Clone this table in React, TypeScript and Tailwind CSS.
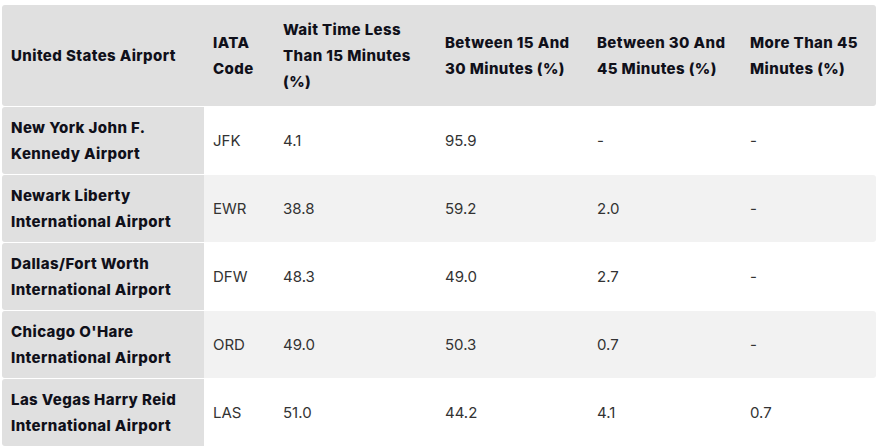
import React from 'react'

interface AirportRow {
  name: string
  code: string
  under15: string
  from15to30: string
  from30to45: string
  over45: string
}

const headers = [
  'United States Airport',
  'IATA Code',
  'Wait Time Less Than 15 Minutes (%)',
  'Between 15 And 30 Minutes (%)',
  'Between 30 And 45 Minutes (%)',
  'More Than 45 Minutes (%)',
]

const rows: AirportRow[] = [
  { name: 'New York John F. Kennedy Airport', code: 'JFK', under15: '4.1', from15to30: '95.9', from30to45: '-', over45: '-' },
  { name: 'Newark Liberty International Airport', code: 'EWR', under15: '38.8', from15to30: '59.2', from30to45: '2.0', over45: '-' },
  { name: 'Dallas/Fort Worth International Airport', code: 'DFW', under15: '48.3', from15to30: '49.0', from30to45: '2.7', over45: '-' },
  { name: "Chicago O'Hare International Airport", code: 'ORD', under15: '49.0', from15to30: '50.3', from30to45: '0.7', over45: '-' },
  { name: 'Las Vegas Harry Reid International Airport', code: 'LAS', under15: '51.0', from15to30: '44.2', from30to45: '4.1', over45: '0.7' },
]

const cols = 'grid grid-cols-[202px_70px_162px_152px_153px_135px]'

export default function App() {
  return (
    <div className="w-[878px] h-[446px] overflow-hidden bg-white pt-[5px] pl-[2px] font-['Inter','Liberation_Sans',sans-serif]">
      <div className="flex w-[874px] flex-col gap-[1px]">
        {/* Header */}
        <div className={`${cols} h-[101px] items-center rounded-[3px] bg-[#e0e0e0]`}>
          {headers.map((h) => (
            <div key={h} className="pl-[9px] pr-[6px] text-[15px] font-extrabold leading-[26px] tracking-[0.4px] text-[#10101a]">
              {h}
            </div>
          ))}
        </div>

        {rows.map((r, i) => (
          <div
            key={r.code}
            className={`${cols} h-[67px] items-stretch rounded-[3px] ${i % 2 === 1 ? 'bg-[#f2f2f2]' : 'bg-white'}`}
          >
            <div className="flex items-center rounded-l-[3px] bg-[#e0e0e0] pl-[9px] pr-[6px] pt-[1px] text-[15px] font-extrabold leading-[26px] tracking-[0.4px] text-[#10101a]">
              {r.name}
            </div>
            {[r.code, r.under15, r.from15to30, r.from30to45, r.over45].map((v, j) => (
              <div key={j} className="flex items-center pl-[9px] text-[15px] leading-[26px] text-[#333333]">
                {v}
              </div>
            ))}
          </div>
        ))}
      </div>
    </div>
  )
}
